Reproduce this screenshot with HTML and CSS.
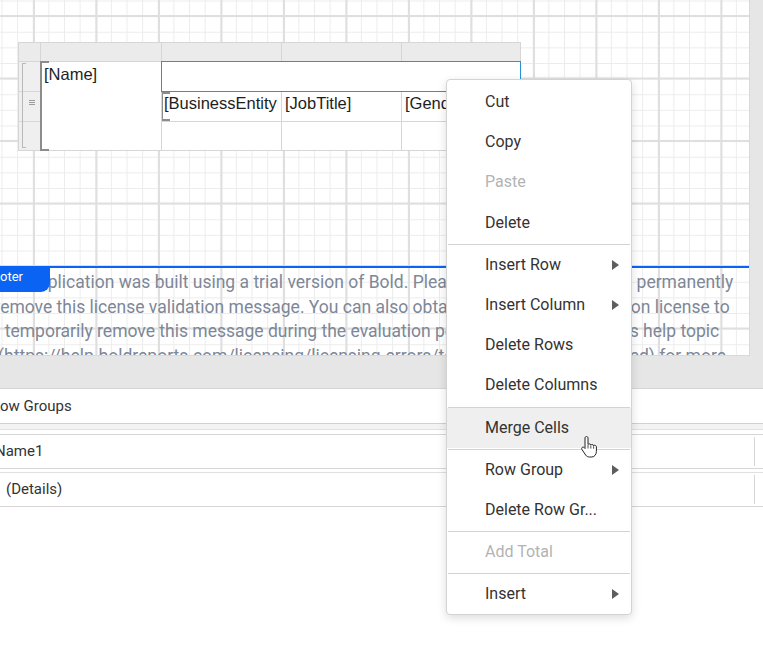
FILE: index.html
```html
<!DOCTYPE html>
<html>
<head>
<meta charset="utf-8">
<link rel="stylesheet" href="styles.css">
</head>
<body>
<div class="top">
  <div class="surface">
    <div class="body-area">
      <div class="tbl">
        <div class="hc c1"></div>
        <div class="hc c2"></div>
        <div class="hc c3"></div>
        <div class="hc c4"></div>
        <div class="hc c5"></div>
        <div class="rh r2"></div>
        <div class="rh r3"><span class="grip"></span></div>
        <div class="rh r4"></div>
        <div class="rh-bracket"></div>
        <div class="cell name bracket"><span class="txt">[Name]</span></div>
        <div class="cell sel"></div>
        <div class="cell c3 r3 bracket small"><span class="txt">[BusinessEntityID]</span></div>
        <div class="cell c4 r3"><span class="txt">[JobTitle]</span></div>
        <div class="cell c5 r3"><span class="txt">[Gender]</span></div>
        <div class="cell c3 r4"></div>
        <div class="cell c4 r4"></div>
        <div class="cell c5 r4"></div>
      </div>
    </div>
    <div class="footer">
      <div class="tab">oter</div>
      <div class="trial">
        <div class="line">This application was built using a trial version of Bold. Please add a valid license to permanently</div>
        <div class="line">remove this license validation message. You can also obtain a free 30 day evaluation license to</div>
        <div class="line">temporarily remove this message during the evaluation period. Please refer to this help topic</div>
        <div class="line">(https://help.boldreports.com/licensing/licensing-errors/temporary-licenses-expired) for more</div>
      </div>
    </div>
  </div>
</div>
<div class="panel">
  <div class="ph">ow Groups</div>
  <div class="band"><div class="band-top"></div></div>
  <div class="prow"><div class="pcell"><span class="name1">Name1</span></div><div class="pdiv"></div></div>
  <div class="gap"></div>
  <div class="prow"><div class="pcell details">(Details)</div><div class="pdiv"></div></div>
</div>

<div class="menu">
  <div class="mi">Cut</div>
  <div class="mi">Copy</div>
  <div class="mi disabled">Paste</div>
  <div class="mi">Delete</div>
  <div class="sep"></div>
  <div class="mi">Insert Row<span class="arrow"></span></div>
  <div class="mi">Insert Column<span class="arrow"></span></div>
  <div class="mi">Delete Rows</div>
  <div class="mi">Delete Columns</div>
  <div class="sep"></div>
  <div class="mi hover">Merge Cells</div>
  <div class="sep"></div>
  <div class="mi">Row Group<span class="arrow"></span></div>
  <div class="mi">Delete Row Gr...</div>
  <div class="sep"></div>
  <div class="mi disabled">Add Total</div>
  <div class="sep"></div>
  <div class="mi">Insert<span class="arrow"></span></div>
</div>

<svg class="cursor" width="18" height="25" viewBox="0 0 18 25">
  <path d="M6.5 1.5c.8 0 1.5.7 1.5 1.5v6.5c.3-.4.8-.6 1.3-.6.8 0 1.4.5 1.5 1.2.3-.4.8-.6 1.3-.6.8 0 1.4.6 1.5 1.3.3-.3.7-.5 1.2-.5.9 0 1.6.7 1.6 1.6v4.6c0 2.6-1.8 5.5-4.6 5.5H9.4c-1.5 0-2.8-.7-3.7-1.9L2 14.6c-.5-.7-.4-1.6.2-2.1.6-.5 1.5-.5 2 .1L5 13.5V3c0-.8.7-1.5 1.5-1.5z" fill="#fff" stroke="#222" stroke-width="1" stroke-linejoin="round"/>
  <path d="M8 10v3.5M10.8 10.6v3M13.6 11.3v2.4" stroke="#222" stroke-width="0.8" fill="none"/>
</svg>
</body>
</html>
```

FILE: styles.css
```css
html, body {
  margin: 0;
  padding: 0;
}
body {
  width: 763px;
  height: 653px;
  overflow: hidden;
  position: relative;
  background: #fff;
  font-family: Roboto, "Liberation Sans", sans-serif;
  color: #333;
}

.top {
  height: 389px;
  box-sizing: border-box;
  background: #e6e6e6;
  border-bottom: 1px solid #d5d5d5;
}

.surface {
  width: 750px;
  height: 356px;
  box-sizing: border-box;
  border-right: 1px solid #d9d9d9;
  border-bottom: 1px solid #d9d9d9;
  display: flex;
  flex-direction: column;
  background-color: #fff;
  background-image:
    linear-gradient(to right, #dfdfdf 2px, transparent 2px),
    linear-gradient(to bottom, #dfdfdf 2px, transparent 2px),
    linear-gradient(to right, #ececec 1px, transparent 1px),
    linear-gradient(to bottom, #ececec 1px, transparent 1px);
  background-size: 62.5px 62.5px, 62.5px 62.5px, 15.625px 15.625px, 15.625px 15.625px;
  background-position: 33px 0, 0 15px, 1.5px 0, 0 0.5px;
}

.body-area {
  height: 266px;
  box-sizing: border-box;
  padding: 42px 0 0 18px;
}

/* report table */
.tbl {
  display: inline-grid;
  grid-template-columns: 21px 120px 119px 119px 118px;
  grid-template-rows: 18px 29px 29px 28px;
  gap: 1px;
  padding: 1px;
  background: #d6d6d6;
}
.hc {
  grid-row: 1;
  background: #ebebeb;
}
.c1 { grid-column: 1; }
.c2 { grid-column: 2; }
.c3 { grid-column: 3; }
.c4 { grid-column: 4; }
.c5 { grid-column: 5; }
.r2 { grid-row: 2; }
.r3 { grid-row: 3; }
.r4 { grid-row: 4; }

.rh {
  grid-column: 1;
  background: #efefef;
}
.rh.r3 {
  padding: 8px 0 0 10px;
  box-sizing: border-box;
}
.grip {
  display: block;
  width: 6px;
  height: 5px;
  background: linear-gradient(to bottom, #9c9c9c 1px, transparent 1px) 0 0 / 6px 2px;
}
.rh-bracket {
  grid-column: 1;
  grid-row: 2 / 5;
  margin: 1px 0 2px 3px;
  width: 3px;
  border: 1px solid #b9b9b9;
  border-right: none;
}

.cell {
  background: #fff;
  position: relative;
  font-family: "Liberation Sans", Arial, sans-serif;
  font-size: 16.5px;
  line-height: 18px;
  color: #1e1e1e;
  padding: 2px 3px 0 3px;
  white-space: nowrap;
  overflow: hidden;
}
.txt {
  display: block;
  overflow: hidden;
}
.cell.small {
  padding-left: 2px;
}
.cell.name {
  grid-column: 2;
  grid-row: 2 / 5;
  padding-top: 3px;
  overflow: visible;
}
.cell.sel {
  grid-column: 3 / 6;
  grid-row: 2;
  outline: 1px solid #2a92d6;
}
.bracket::before {
  content: "";
  position: absolute;
  left: -1px;
  top: 0;
  bottom: 0;
  width: 7px;
  border: 2px solid #8c8c8c;
  border-right: none;
}
.cell.name::before {
  top: -1px;
  bottom: -1px;
}

/* footer band */
.footer {
  flex: 1;
  position: relative;
  overflow: hidden;
  border-top: 2px solid #0b63f4;
}
.tab {
  position: absolute;
  left: 0;
  top: -2px;
  width: 50px;
  height: 26px;
  background: #0b63f4;
  border-radius: 0 0 9px 0;
  color: #fff;
  font-size: 13px;
  line-height: 22px;
  z-index: 1;
}
.trial {
  width: 724px;
  padding-top: 2px;
  font-size: 17.5px;
  line-height: 24.5px;
  color: #7d8797;
}
.line {
  display: flex;
  justify-content: center;
  white-space: nowrap;
}

/* bottom grouping panel */
.panel {
  font-size: 15px;
  color: #333;
}
.ph {
  height: 35px;
  box-sizing: border-box;
  border-bottom: 1px solid #d0d0d0;
  line-height: 34px;
}
.band {
  height: 11px;
  box-sizing: border-box;
  border-bottom: 1px solid #d6d6d6;
}
.band-top {
  height: 6px;
  box-sizing: border-box;
  background: #f3f3f3;
  border-bottom: 1px solid #e0e0e0;
}
.prow {
  height: 34px;
  box-sizing: border-box;
  border-bottom: 1px solid #d6d6d6;
  display: flex;
}
.pcell {
  flex: 1;
  line-height: 33px;
  white-space: nowrap;
}
.name1 {
  margin-left: -5px;
}
.details {
  padding-left: 6px;
}
.pdiv {
  width: 8px;
  margin: 2px 0;
  border-left: 1px solid #d6d6d6;
}
.gap {
  height: 4px;
  box-sizing: border-box;
  border-bottom: 1px solid #e0e0e0;
}

/* context menu */
.menu {
  position: absolute;
  left: 446px;
  top: 79px;
  width: 186px;
  box-sizing: border-box;
  padding: 2px 0 0;
  background: #fff;
  border: 1px solid #d3d3d3;
  border-radius: 4px;
  box-shadow: 0 3px 10px rgba(0, 0, 0, 0.14);
  font-size: 16px;
  color: #333;
}
.mi {
  height: 40.2px;
  line-height: 40px;
  padding: 0 12px 0 38px;
  display: flex;
  align-items: center;
  white-space: nowrap;
}
.mi.disabled {
  color: #b3b3b3;
}
.mi.hover {
  background: #efefef;
}
.arrow {
  margin-left: auto;
  width: 0;
  height: 0;
  border-left: 7px solid #5e5e5e;
  border-top: 5px solid transparent;
  border-bottom: 5px solid transparent;
}
.sep {
  height: 1px;
  margin: 1px 1px 0;
  background: #d3d3d3;
}

.cursor {
  position: absolute;
  left: 580px;
  top: 435px;
}
```
